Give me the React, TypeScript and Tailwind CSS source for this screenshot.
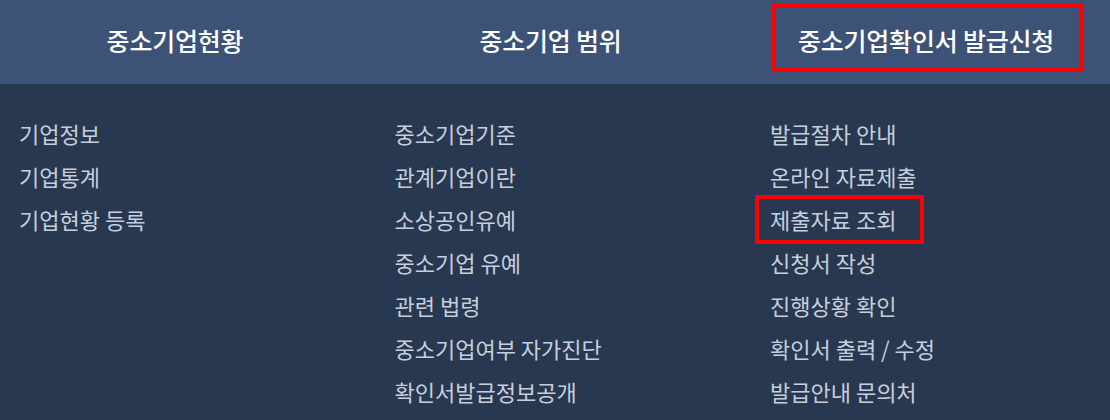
import React from "react";

const cols: { title: string; items: string[] }[] = [
  { title: "중소기업현황", items: ["기업정보", "기업통계", "기업현황 등록"] },
  {
    title: "중소기업 범위",
    items: [
      "중소기업기준",
      "관계기업이란",
      "소상공인유예",
      "중소기업 유예",
      "관련 법령",
      "중소기업여부 자가진단",
      "확인서발급정보공개",
    ],
  },
  {
    title: "중소기업확인서 발급신청",
    items: [
      "발급절차 안내",
      "온라인 자료제출",
      "제출자료 조회",
      "신청서 작성",
      "진행상황 확인",
      "확인서 출력 / 수정",
      "발급안내 문의처",
    ],
  },
];

export default function App() {
  return (
    <div
      className="w-[1110px] h-[420px] overflow-hidden bg-[#293851]"
      style={{ fontFamily: '"Noto Sans CJK KR", "Noto Sans", sans-serif' }}
    >
      <div className="h-[84px] bg-[#3c5377] grid grid-cols-[350px_350px_350px] gap-x-[25.5px]">
        {cols.map((c, i) => (
          <div key={i} className="relative flex items-center justify-center pb-[4px]">
            <span className="text-[25px] font-medium text-white tracking-[-0.2px] leading-none whitespace-nowrap">
              {c.title}
            </span>
            {i === 2 && (
              <div className="absolute left-[21px] right-[18px] top-[4px] bottom-[12px] border-[4px] border-[#ff0000]" />
            )}
          </div>
        ))}
      </div>
      <div className="pt-[28px] pl-[19px] grid grid-cols-[350px_350px_350px] gap-x-[25.5px]">
        {cols.map((c, i) => (
          <ul key={i} className="flex flex-col">
            {c.items.map((it, j) => (
              <li
                key={j}
                className="relative h-[43px] leading-[43px] text-[22px] text-[#c6cfdc] whitespace-nowrap"
              >
                {it}
                {i === 2 && j === 2 && (
                  <span className="absolute left-[-15px] w-[169px] top-[-3px] h-[49px] border-[4px] border-[#ff0000]" />
                )}
              </li>
            ))}
          </ul>
        ))}
      </div>
    </div>
  );
}
